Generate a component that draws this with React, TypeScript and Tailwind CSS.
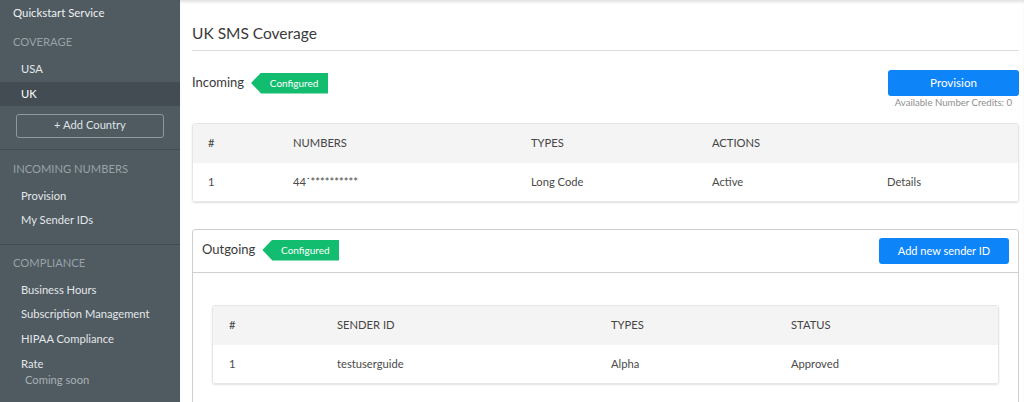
import React from 'react';

const font = { fontFamily: 'Lato, "Open Sans", sans-serif' };

function Badge() {
  return (
    <span className="ml-[7px] inline-flex h-[21px] w-[77px] items-center justify-center bg-[#13bd70] pl-[9px] text-[10px] text-white [clip-path:polygon(10px_0,100%_0,100%_100%,10px_100%,0_50%)]">
      Configured
    </span>
  );
}

function SideItem({ label, active }: { label: string; active?: boolean }) {
  return (
    <div
      className={
        'h-[24.6px] pl-[21px] text-[11.2px] leading-[24.6px] ' +
        (active ? 'bg-[#434c52] text-white' : 'text-[#e3e7e9]')
      }
    >
      {label}
    </div>
  );
}

function SectionTitle({ label, className }: { label: string; className?: string }) {
  return (
    <div className={'h-[24px] pl-[13px] text-[11.2px] uppercase leading-[24px] text-[#98a2a7] ' + (className ?? '')}>
      {label}
    </div>
  );
}

function Sidebar() {
  return (
    <aside className="w-[180px] shrink-0 bg-[#4f5a61] pt-[1px]">
      <div className="h-[24px] pl-[13px] text-[11.4px] leading-[24px] text-[#eef0f1]">Quickstart Service</div>
      <SectionTitle label="Coverage" className="mt-[5px]" />
      <div className="mt-[3px]">
        <SideItem label="USA" />
        <SideItem label="UK" active />
      </div>
      <div className="px-[16px] pt-[5px]">
        <button className="h-[24px] w-full rounded-[3px] border border-[#8e989d] text-[11.2px] text-[#dfe3e5]">
          + Add Country
        </button>
      </div>
      <div className="mt-[11px] border-t border-[#434c52]" />
      <SectionTitle label="Incoming Numbers" className="mt-[7px]" />
      <div className="mt-[3px]">
        <SideItem label="Provision" />
        <SideItem label="My Sender IDs" />
      </div>
      <div className="mt-[11px] border-t border-[#434c52]" />
      <SectionTitle label="Compliance" className="mt-[6px]" />
      <div className="mt-[3px]">
        <SideItem label="Business Hours" />
        <SideItem label="Subscription Management" />
        <SideItem label="HIPAA Compliance" />
        <SideItem label="Rate" />
        <div className="-mt-[4px] h-[16px] pl-[25px] text-[11.2px] leading-[16px] text-[#a9b1b5]">Coming soon</div>
      </div>
      <div className="h-[40px]" />
    </aside>
  );
}

function Table({
  cols,
  headers,
  row,
  padLeft,
}: {
  cols: string;
  headers: string[];
  row: string[];
  padLeft: string;
}) {
  return (
    <div className="overflow-hidden rounded-[3px] border border-[#e6e6e6] shadow-[0_1px_2px_rgba(0,0,0,0.12)]">
      <div className={'grid h-[39px] items-center bg-[#f4f4f4] text-[11.2px] text-[#444] ' + cols + ' ' + padLeft}>
        {headers.map((h, i) => (
          <div key={i}>{h}</div>
        ))}
      </div>
      <div className={'grid h-[38px] items-center bg-white text-[11.2px] text-[#4a4a4a] ' + cols + ' ' + padLeft}>
        {row.map((c, i) => (
          <div key={i}>{c}</div>
        ))}
      </div>
    </div>
  );
}

export default function App() {
  return (
    <div className="flex h-[402px] w-[1024px] overflow-hidden bg-white" style={font}>
      <Sidebar />
      <main className="relative flex-1 pl-[12px] pr-[5px] shadow-[inset_0_3px_3px_-1px_rgba(0,0,0,0.12)]">
        <div className="border-b border-[#dcdcdc] pb-[6px] pt-[22px]">
          <h1 className="text-[15.5px] leading-[22px] text-[#3a3a3a]">UK SMS Coverage</h1>
        </div>

        <div className="mt-[19px] flex items-start justify-between">
          <div className="flex h-[26px] items-center">
            <span className="text-[13px] text-[#3a3a3a]">Incoming</span>
            <Badge />
          </div>
          <div className="flex flex-col items-end">
            <button className="h-[26px] w-[131px] rounded-[3px] bg-[#0d84f7] text-[11.6px] text-white">Provision</button>
            <div className="mr-[7px] mt-[1px] text-[9.6px] leading-[12px] text-[#8f8f8f]">Available Number Credits: 0</div>
          </div>
        </div>

        <div className="mt-[14px]">
          <Table
            cols="grid-cols-[85px_238px_181px_175px_1fr]"
            padLeft="pl-[15px]"
            headers={['#', 'NUMBERS', 'TYPES', 'ACTIONS', '']}
            row={['1', '44˙**********', 'Long Code', 'Active', 'Details']}
          />
        </div>

        <div className="mt-[27px] rounded-[3px] border border-[#cfcfcf]">
          <div className="flex h-[43px] items-center justify-between border-b border-[#cfcfcf] px-[9px]">
            <div className="-mt-[2px] flex items-center">
              <span className="text-[13px] text-[#3a3a3a]">Outgoing</span>
              <Badge />
            </div>
            <button className="h-[26px] w-[130px] rounded-[3px] bg-[#0d84f7] text-[11px] text-white">Add new sender ID</button>
          </div>
          <div className="px-[19px] pb-[30px] pt-[32px]">
            <Table
              cols="grid-cols-[108px_274px_180px_1fr]"
              padLeft="pl-[16px]"
              headers={['#', 'SENDER ID', 'TYPES', 'STATUS']}
              row={['1', 'testuserguide', 'Alpha', 'Approved']}
            />
          </div>
        </div>
      </main>
    </div>
  );
}
